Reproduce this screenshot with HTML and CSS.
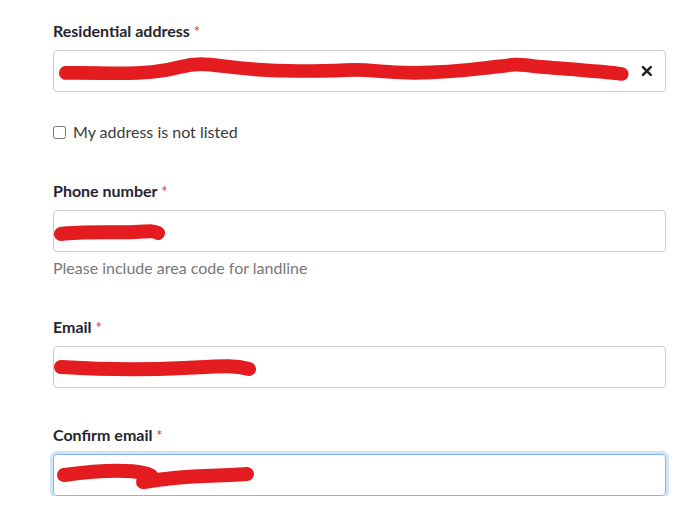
FILE: index.html
```html
<!DOCTYPE html>
<html lang="en">
<head>
    <meta charset="UTF-8">
    <title>Contact details</title>
    <link rel="stylesheet" href="styles.css">
</head>
<body>
<div class="form">
    <div class="field">
        <label class="label">Residential address <span class="req">*</span></label>
        <div class="input">
            <svg class="scribble" width="600" height="40" viewBox="0 0 600 40">
                <path d="M12 22 C 40 21, 70 24, 100 21 S 130 13, 150 13 S 190 20, 250 20 S 300 17, 330 20 S 400 22, 440 17 S 470 13, 490 15 S 560 20, 580 23" />
            </svg>
            <svg class="clear" width="12" height="12" viewBox="0 0 12 12">
                <path d="M2 2 L10 10 M10 2 L2 10" />
            </svg>
        </div>
    </div>

    <label class="check">
        <input type="checkbox">
        <span>My address is not listed</span>
    </label>

    <div class="field phone">
        <label class="label">Phone number <span class="req">*</span></label>
        <div class="input">
            <svg class="scribble" width="120" height="40" viewBox="0 0 120 40">
                <path d="M7 23 C 30 20, 60 22, 80 21 S 100 20, 104 22" />
            </svg>
        </div>
        <div class="help">Please include area code for landline</div>
    </div>

    <div class="field email">
        <label class="label">Email <span class="req">*</span></label>
        <div class="input">
            <svg class="scribble" width="220" height="40" viewBox="0 0 220 40">
                <path d="M7 20 C 40 22, 90 23, 130 21 S 180 18, 195 22" />
            </svg>
        </div>
    </div>

    <div class="field confirm">
        <label class="label">Confirm email <span class="req">*</span></label>
        <div class="input focus">
            <svg class="scribble" width="220" height="40" viewBox="0 0 220 40">
                <path d="M10 20 C 40 16, 70 14, 90 18 S 84 28, 90 27 S 120 22, 150 21 S 180 20, 193 19" />
            </svg>
        </div>
    </div>
</div>
</body>
</html>
```

FILE: styles.css
```css
body { margin: 0; background: #fff; font-family: 'Lato', 'Open Sans', sans-serif; color: #333; }
.form { width: 613px; padding: 21px 0 0 53px; }
.field.phone { margin-top: 39px; }
.field.email { margin-top: 39px; }
.field.confirm { margin-top: 37px; }
.label { display: block; font-weight: 700; font-size: 16px; line-height: 20px; color: #25252d; margin-bottom: 9px; }
.req { color: #d9363e; font-weight: 400; font-size: 15px; }
.input { box-sizing: border-box; height: 42px; border: 1px solid #ccc; border-radius: 4px; display: flex; align-items: center; justify-content: space-between; padding-right: 12px; overflow: hidden; }
.input.focus { border-color: #86b4ee; box-shadow: 0 0 0 3px #cfe3fb; }
.scribble { display: block; }
.scribble path { fill: none; stroke: #e41b1f; stroke-width: 14; stroke-linecap: round; stroke-linejoin: round; }
.clear path { fill: none; stroke: #222; stroke-width: 2.6; stroke-linecap: round; }
.check { display: flex; align-items: center; gap: 7px; font-size: 16px; line-height: 20px; color: #3a3a3a; margin-top: 30px; }
.check input { width: 13px; height: 13px; margin: 0; }
.help { font-size: 16px; line-height: 20px; color: #777; margin-top: 6px; }
```
